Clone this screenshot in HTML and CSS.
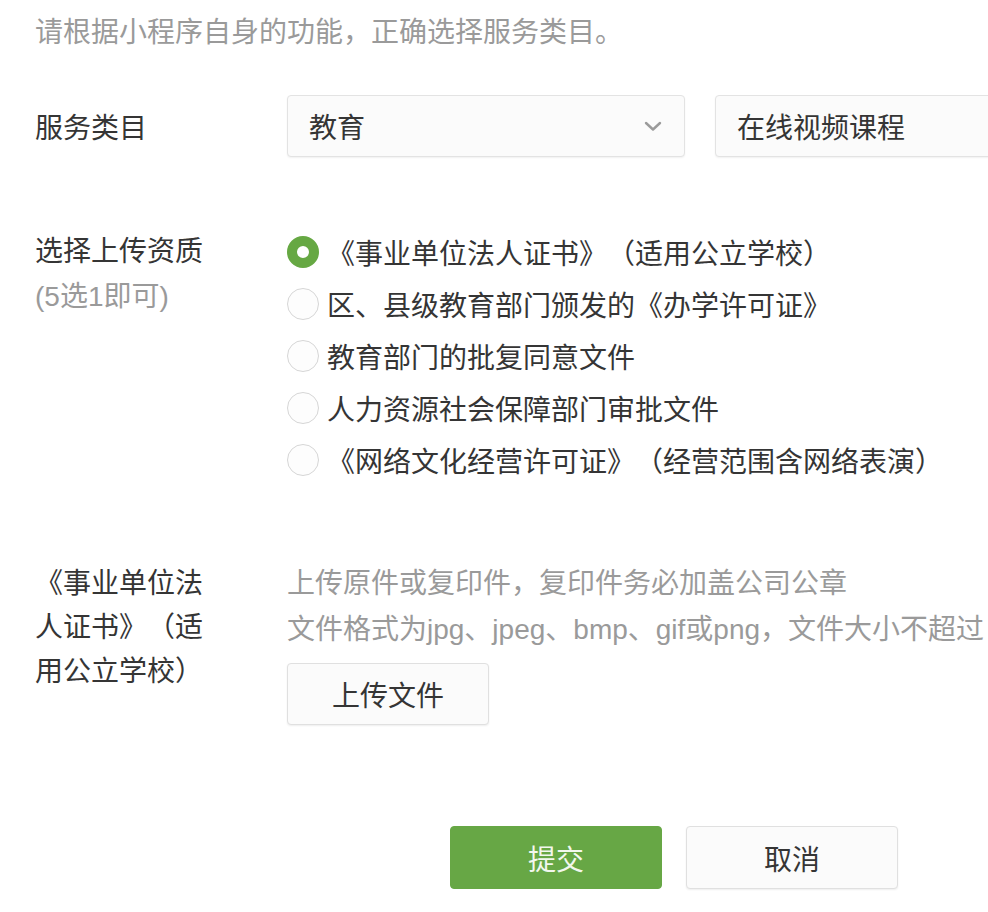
FILE: index.html
```html
<!DOCTYPE html>
<html lang="zh-CN">
<head>
<meta charset="utf-8">
<title>服务类目</title>
<link rel="stylesheet" href="styles.css">
</head>
<body>
<div class="page">
  <p class="intro">请根据小程序自身的功能，正确选择服务类目。</p>

  <div class="row row-category">
    <div class="label">服务类目</div>
    <div class="field selects">
      <div class="select first">
        <span>教育</span>
        <svg class="chev" width="18" height="12" viewBox="0 0 18 12"><path d="M2 3 L9 9.5 L16 3" fill="none" stroke="#9b9b9b" stroke-width="2.4" stroke-linecap="round" stroke-linejoin="round"/></svg>
      </div>
      <div class="select second"><span>在线视频课程</span></div>
    </div>
  </div>

  <div class="row row-qual">
    <div class="label">
      <div>选择上传资质</div>
      <div class="sub">(5选1即可)</div>
    </div>
    <div class="field radios">
      <label class="radio checked"><span class="dot"></span><span>《事业单位法人证书》（适用公立学校）</span></label>
      <label class="radio"><span class="dot"></span><span>区、县级教育部门颁发的《办学许可证》</span></label>
      <label class="radio"><span class="dot"></span><span>教育部门的批复同意文件</span></label>
      <label class="radio"><span class="dot"></span><span>人力资源社会保障部门审批文件</span></label>
      <label class="radio"><span class="dot"></span><span>《网络文化经营许可证》（经营范围含网络表演）</span></label>
    </div>
  </div>

  <div class="row row-upload">
    <div class="label"><div class="wrap">《事业单位法人证书》（适用公立学校）</div></div>
    <div class="field upload">
      <div class="hint">上传原件或复印件，复印件务必加盖公司公章</div>
      <div class="hint">文件格式为jpg、jpeg、bmp、gif或png，文件大小不超过</div>
      <button class="btn upload-btn">上传文件</button>
    </div>
  </div>

  <div class="actions">
    <button class="btn primary">提交</button>
    <button class="btn">取消</button>
  </div>
</div>
</body>
</html>
```

FILE: styles.css
```css
html, body {
  margin: 0;
  padding: 0;
  background: #ffffff;
  overflow: hidden;
}
body {
  font-family: "Liberation Sans", "Noto Sans CJK SC", sans-serif;
  font-size: 28px;
  color: #353535;
  width: 988px;
  height: 912px;
  text-spacing-trim: space-all;
}
.page {
  padding-left: 35px;
  width: 1400px;
}
.intro {
  margin: 13px 0 0 0;
  line-height: 40px;
  color: #9a9a9a;
  white-space: nowrap;
}
.row {
  display: flex;
  align-items: flex-start;
}
.label {
  width: 252px;
  flex: none;
}
.field {
  flex: none;
}
.row-category {
  margin-top: 42px;
  align-items: center;
}
.selects {
  display: flex;
  gap: 30px;
}
.select {
  box-sizing: border-box;
  height: 62px;
  border: 1px solid #e3e3e3;
  border-radius: 4px;
  background: #fbfbfb;
  box-shadow: 0 1px 2px rgba(0,0,0,0.06);
  display: flex;
  align-items: center;
  justify-content: space-between;
  padding: 0 22px 0 21px;
}
.select.first { width: 398px; }
.select.second { width: 420px; }

.row-qual {
  margin-top: 69px;
}
.row-qual .label {
  line-height: 52px;
}
.row-qual .label .sub {
  color: #9a9a9a;
  line-height: 38px;
  margin-top: 0;
}
.radios {
  display: flex;
  flex-direction: column;
}
.radio {
  display: flex;
  align-items: center;
  height: 52px;
  white-space: nowrap;
  gap: 8px;
}
.dot {
  box-sizing: border-box;
  width: 32px;
  height: 32px;
  border-radius: 50%;
  border: 1.5px solid #d6d6d6;
  background: #fdfdfd;
  flex: none;
}
.radio.checked .dot {
  border: 10px solid #66a843;
  background: #ffffff;
}

.row-upload {
  margin-top: 75px;
}
.row-upload .label .wrap {
  width: 180px;
  line-height: 44px;
  margin-top: 1px;
}
.hint {
  color: #9a9a9a;
  line-height: 46px;
  white-space: nowrap;
}
.btn {
  box-sizing: border-box;
  font-family: inherit;
  font-size: 28px;
  color: #353535;
  background: #fbfbfb;
  border: 1px solid #e0e0e0;
  border-radius: 4px;
  box-shadow: 0 1px 2px rgba(0,0,0,0.07);
  height: 62px;
  padding: 0;
  cursor: pointer;
}
.upload-btn {
  width: 202px;
  margin-top: 10px;
  display: block;
}
.actions {
  margin-top: 101px;
  margin-left: 415px;
  display: flex;
  gap: 24px;
}
.actions .btn {
  width: 212px;
  height: 63px;
}
.actions .btn.primary {
  background: #67a745;
  border-color: #67a745;
  color: #f2f7ee;
  box-shadow: none;
}
```
